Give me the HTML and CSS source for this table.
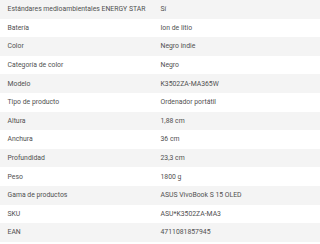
FILE: index.html
```html
<!DOCTYPE html>
<html lang="es">
<head>
<meta charset="utf-8">
<link rel="stylesheet" href="styles.css">
</head>
<body>
<div class="specs">
<div class="row"><span class="k">Estándares medioambientales ENERGY STAR</span><span class="v">Sí</span></div>
<div class="row"><span class="k">Batería</span><span class="v">Ion de litio</span></div>
<div class="row"><span class="k">Color</span><span class="v">Negro indie</span></div>
<div class="row"><span class="k">Categoría de color</span><span class="v">Negro</span></div>
<div class="row"><span class="k">Modelo</span><span class="v">K3502ZA-MA365W</span></div>
<div class="row"><span class="k">Tipo de producto</span><span class="v">Ordenador portátil</span></div>
<div class="row"><span class="k">Altura</span><span class="v">1,88 cm</span></div>
<div class="row"><span class="k">Anchura</span><span class="v">36 cm</span></div>
<div class="row"><span class="k">Profundidad</span><span class="v">23,3 cm</span></div>
<div class="row"><span class="k">Peso</span><span class="v">1800 g</span></div>
<div class="row"><span class="k">Gama de productos</span><span class="v">ASUS VivoBook S 15 OLED</span></div>
<div class="row"><span class="k">SKU</span><span class="v">ASU*K3502ZA-MA3</span></div>
<div class="row"><span class="k">EAN</span><span class="v">4711081857945</span></div>
</div>
</body>
</html>
```
FILE: styles.css
```css
html, body {
  margin: 0;
  padding: 0;
  background: #fff;
}
.specs {
  width: 320px;
  display: flex;
  flex-direction: column;
  font-family: Roboto, "Liberation Sans", sans-serif;
  font-size: 6.85px;
  color: #505050;
}
.row {
  display: grid;
  grid-template-columns: 153px 1fr;
  align-items: center;
  height: 18.6px;
  padding-left: 7.5px;
}
.row:nth-child(odd) {
  background: #f4f4f4;
}
.k, .v {
  white-space: nowrap;
}
```
